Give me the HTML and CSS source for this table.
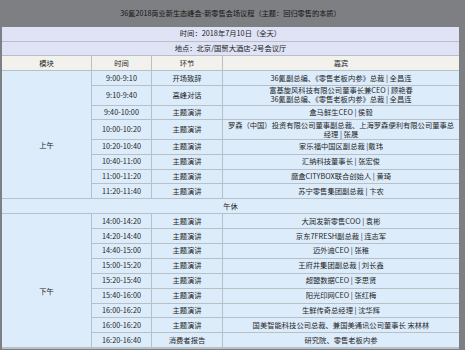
FILE: index.html
```html
<!DOCTYPE html>
<html lang="zh-CN">
<head>
<meta charset="utf-8">
<title>36氪2018商业新生态峰会-新零售会场议程</title>
<link rel="stylesheet" href="styles.css">
</head>
<body>
<div class="frame">
  <div class="title">36氪2018商业新生态峰会-新零售会场议程（主题：回归零售的本质）</div>
  <div class="agenda">
    <div class="info">时间：2018年7月10日（全天）</div>
    <div class="info">地点：北京/国贸大酒店-2号会议厅</div>
    <div class="head">模块</div>
    <div class="head">时间</div>
    <div class="head">环节</div>
    <div class="head">嘉宾</div>

    <div class="block am">上午</div>
    <div class="cell">9:00-9:10</div><div class="cell">开场致辞</div><div class="cell">36氪副总编、《零售老板内参》总裁 | 全昌连</div>
    <div class="cell">9:10-9:40</div><div class="cell">高峰对话</div><div class="cell two">富基旋风科技有限公司董事长兼CEO | 顾艳春<br>36氪副总编、《零售老板内参》总裁 | 全昌连</div>
    <div class="cell">9:40-10:00</div><div class="cell">主题演讲</div><div class="cell">盒马鲜生CEO | 侯毅</div>
    <div class="cell">10:00-10:20</div><div class="cell">主题演讲</div><div class="cell two">罗森（中国）投资有限公司董事副总裁、上海罗森便利有限公司董事总<br>经理 | 张晟</div>
    <div class="cell">10:20-10:40</div><div class="cell">主题演讲</div><div class="cell">家乐福中国区副总裁 |戴玮</div>
    <div class="cell">10:40-11:00</div><div class="cell">主题演讲</div><div class="cell">汇纳科技董事长 | 张宏俊</div>
    <div class="cell">11:00-11:20</div><div class="cell">主题演讲</div><div class="cell">魔盒CITYBOX联合创始人 | 黄琦</div>
    <div class="cell">11:20-11:40</div><div class="cell">主题演讲</div><div class="cell">苏宁零售集团副总裁 | 卞农</div>

    <div class="info break">午休</div>

    <div class="block pm">下午</div>
    <div class="cell">14:00-14:20</div><div class="cell">主题演讲</div><div class="cell">大润发新零售COO | 袁彬</div>
    <div class="cell">14:20-14:40</div><div class="cell">主题演讲</div><div class="cell">京东7FRESH副总裁 | 连志军</div>
    <div class="cell">14:40-15:00</div><div class="cell">主题演讲</div><div class="cell">迈外迪CEO | 张稚</div>
    <div class="cell">15:00-15:20</div><div class="cell">主题演讲</div><div class="cell">王府井集团副总裁 | 刘长鑫</div>
    <div class="cell">15:20-15:40</div><div class="cell">主题演讲</div><div class="cell">超盟数据CEO | 李思贤</div>
    <div class="cell">15:40-16:00</div><div class="cell">主题演讲</div><div class="cell">阳光印网CEO | 张红梅</div>
    <div class="cell">16:00-16:20</div><div class="cell">主题演讲</div><div class="cell">生鲜传奇总经理 | 沈华辉</div>
    <div class="cell">16:00-16:20</div><div class="cell">主题演讲</div><div class="cell">国美智能科技公司总裁、兼国美通讯公司董事长 宋林林</div>
    <div class="cell">16:20-16:40</div><div class="cell">消费者报告</div><div class="cell">研究院、零售老板内参</div>
  </div>
</div>
</body>
</html>
```

FILE: styles.css
```css
html, body {
  margin: 0;
  padding: 0;
  width: 465px;
  height: 350px;
  overflow: hidden;
  background: #7d7f82;
}

.frame {
  width: 465px;
  height: 350px;
  box-sizing: border-box;
  padding: 0 6px 0 2px;
  display: flex;
  flex-direction: column;
  font-family: "Noto Sans CJK SC", "Noto Sans", sans-serif;
  font-size: 7.3px;
  color: #1f1f1f;
}

.title {
  height: 26.7px;
  flex: none;
  display: flex;
  align-items: center;
  justify-content: center;
  color: #141414;
  font-size: 7.2px;
}

.agenda {
  flex: none;
  display: grid;
  grid-template-columns: 89px 59px 70px 1fr;
  grid-template-rows: repeat(4, 13.9px) 18.3px 13.9px 18.3px repeat(14, 13.9px);
  gap: 1px;
  background: #b7bfc7;
  height: 322px;
  overflow: hidden;
}

.agenda > div {
  display: flex;
  align-items: center;
  justify-content: center;
  text-align: center;
  line-height: 9px;
  white-space: nowrap;
}

.info {
  grid-column: 1 / -1;
  background: #dfe3f5;
  color: #1a1a1a;
}

.info.break {
  background: #dcecfb;
}

.head {
  background: #f2f1ee;
}

.cell {
  background: #dcecfb;
}

.block {
  grid-column: 1;
  background: #dcecfb;
  padding-top: 21px;
  box-sizing: border-box;
}

.am {
  grid-row: 4 / span 8;
}

.pm {
  grid-row: 13 / span 9;
}
```
